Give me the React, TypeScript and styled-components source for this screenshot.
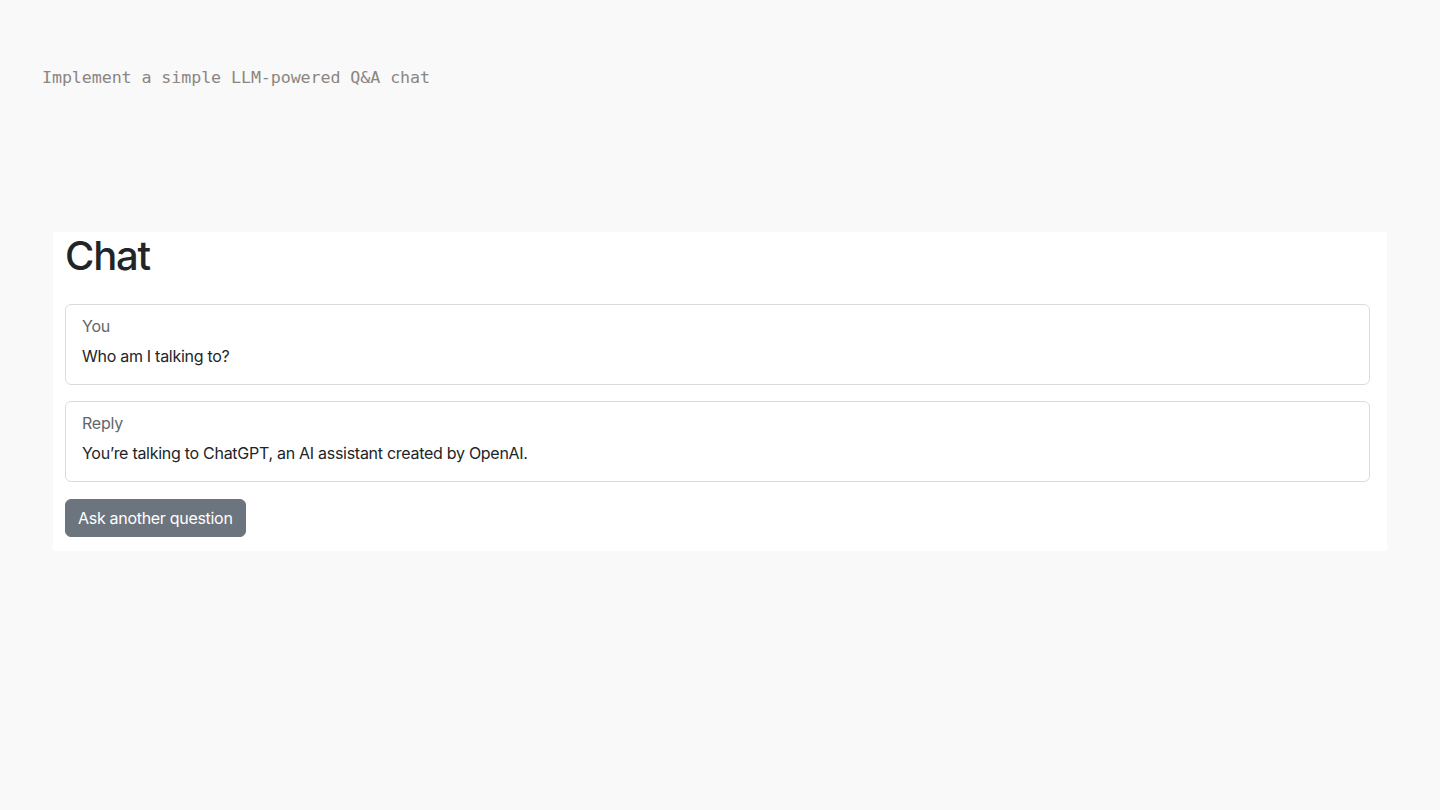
import styled, { createGlobalStyle } from "styled-components";

const GlobalStyle = createGlobalStyle`
    html, body {
        margin: 0;
        padding: 0;
        background: #f9f9f9;
    }
    * {
        box-sizing: border-box;
    }
`;

const Page = styled.div`
    min-height: 810px;
    padding: 65px 53px 0 42px;
`;

const TaskLine = styled.div`
    font-family: "DejaVu Sans Mono", "Liberation Mono", monospace;
    font-size: 16.7px;
    line-height: 24px;
    color: #8b8681;
    letter-spacing: -0.1px;
`;

const Panel = styled.main`
    margin: 143px 0 0 11px;
    background: #ffffff;
    padding: 0 17px 14px 12px;
    font-family: Inter, "Liberation Sans", Arial, sans-serif;
    color: #212529;
`;

const Title = styled.h1`
    margin: 0 0 24px;
    font-size: 40px;
    font-weight: 500;
    line-height: 48px;
    letter-spacing: -1.2px;
`;

const Card = styled.section`
    border: 1px solid #d9dcdf;
    border-radius: 6px;
    padding: 10px 16px 16px;
    margin-bottom: 16px;
`;

const Label = styled.div`
    font-size: 16px;
    line-height: 22px;
    color: #5f666c;
    margin-bottom: 7px;
    letter-spacing: -0.25px;
`;

const Body = styled.div`
    font-size: 16px;
    line-height: 24px;
    letter-spacing: -0.28px;
`;

const Button = styled.button`
    margin-top: 1px;
    font-family: Inter, "Liberation Sans", Arial, sans-serif;
    font-size: 16px;
    line-height: 24px;
    letter-spacing: -0.3px;
    color: #ffffff;
    background: #6c757d;
    border: 1px solid #6c757d;
    border-radius: 6px;
    padding: 6px 12px;
    cursor: pointer;

    &:hover {
        background: #5c636a;
    }
`;

const messages = [
    { who: "You", text: "Who am I talking to?" },
    { who: "Reply", text: "You\u2019re talking to ChatGPT, an AI assistant created by OpenAI." },
];

export default function App() {
    return (
        <Page>
            <GlobalStyle />
            <TaskLine>Implement a simple LLM-powered Q&amp;A chat</TaskLine>
            <Panel>
                <Title>Chat</Title>
                {messages.map((m) => (
                    <Card key={m.who}>
                        <Label>{m.who}</Label>
                        <Body>{m.text}</Body>
                    </Card>
                ))}
                <Button>Ask another question</Button>
            </Panel>
        </Page>
    );
}
